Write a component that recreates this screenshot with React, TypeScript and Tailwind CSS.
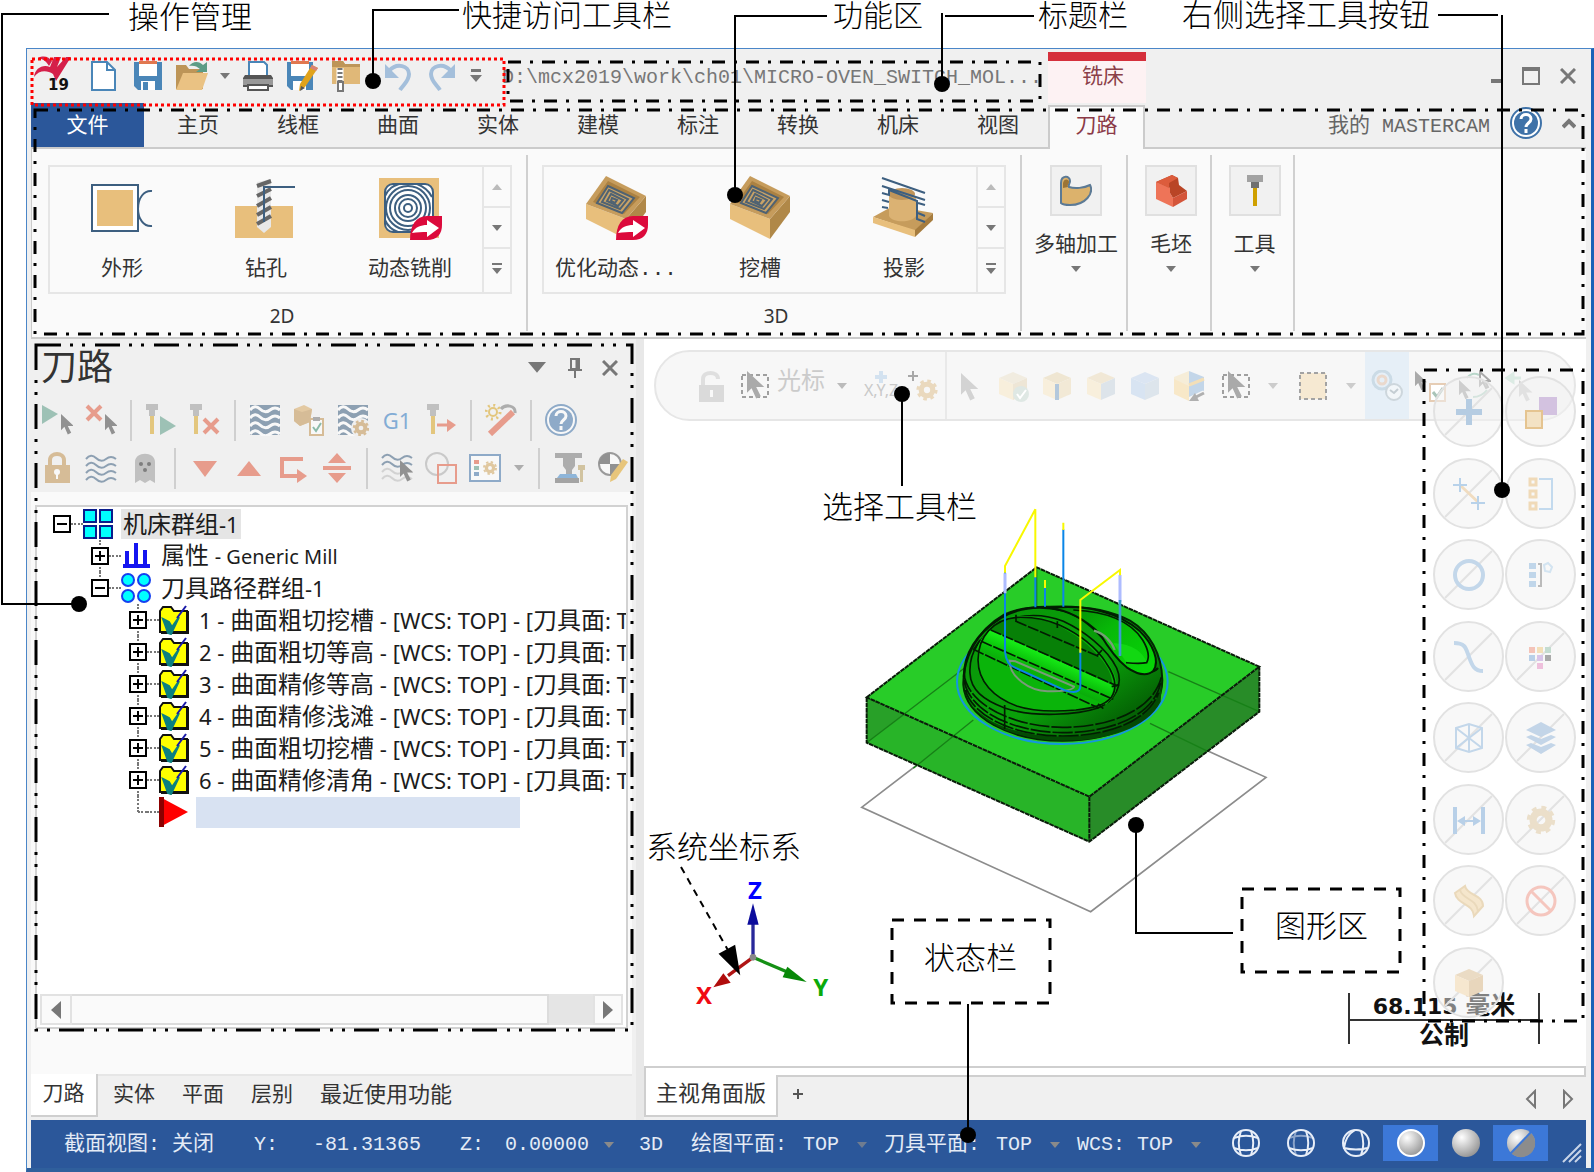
import React from "react";
import clsx from "clsx";

// ============================================================
// Mastercam 2019 workspace — annotated overview
// ============================================================

const SANS = "font-['Noto_Sans_CJK_SC','Noto_Sans',sans-serif]";
const MONO = "font-['Liberation_Mono','Noto_Sans_CJK_SC',monospace]";
const NOTE = "font-['Liberation_Serif','Noto_Sans_CJK_SC',serif]";

// ---------- drawing helpers ----------

function Svg({ w = 32, h = 32, className, children }: { w?: number; h?: number; className?: string; children: React.ReactNode }) {
  return (
    <svg width={w} height={h} viewBox={`0 0 ${w} ${h}`} className={clsx("shrink-0", className)} fill="none" aria-hidden="true">
      {children}
    </svg>
  );
}

function Caret({ color = "#777", w = 10 }: { color?: string; w?: number }) {
  return (
    <svg width={w} height={w * 0.6} viewBox="0 0 10 6" className="shrink-0" aria-hidden="true">
      <path d="M0 0h10l-5 6z" fill={color} />
    </svg>
  );
}

function Cursor({ x = 0, y = 0, s = 1, fill = "#777" }: { x?: number; y?: number; s?: number; fill?: string }) {
  return <path transform={`translate(${x} ${y}) scale(${s})`} d="M0 0v19l4-4 4 9 4-2-4-8h7z" fill={fill} />;
}

function Gear({ x, y, r = 7, color = "#d3a860" }: { x: number; y: number; r?: number; color?: string }) {
  const step = (2 * Math.PI * (r + 1)) / 16;
  return (
    <g stroke={color}>
      <circle cx={x} cy={y} r={r * 0.72} strokeWidth={r * 0.65} />
      <circle cx={x} cy={y} r={r + 1} strokeWidth={r * 0.4} strokeDasharray={`${step} ${step}`} />
    </g>
  );
}

function Cube({ top, left, right }: { top: string; left: string; right: string }) {
  return (
    <g>
      <path d="M16 2l14 6-14 6L2 8z" fill={top} />
      <path d="M2 8l14 6v16L2 24z" fill={left} />
      <path d="M30 8l-14 6v16l14-6z" fill={right} />
    </g>
  );
}

function MillTool({ x = 0 }: { x?: number }) {
  return (
    <g transform={`translate(${x} 0)`}>
      <path d="M0 0h12v6H9v6H3V6H0z" fill="#9a9a9a" />
      <path d="M4 12h4v18H4z" fill="#d9a520" />
    </g>
  );
}

function Waves({ color, rows, w = 2 }: { color: string; rows: number[]; w?: number }) {
  return (
    <g stroke={color} strokeWidth={w}>
      {rows.map((y) => (
        <path key={y} d={`M1 ${y}q5-6 10-1t10 1 10 0`} />
      ))}
    </g>
  );
}

function ArrowBadge() {
  return (
    <g>
      <path d="M33 64c0-15 6-24 17-24h15v9c0 9-5 15-15 15z" fill="#dc0a3c" />
      <path d="M35 57c3-6 9-8 15-8v-5l12 8-12 9v-5c-5 0-10 0-15 1z" fill="#fff" />
    </g>
  );
}

// ---------- quick access toolbar ----------

const quickIcons: { name: string; width: string; icon: React.ReactNode }[] = [
  {
    name: "新建",
    width: "w-[44px]",
    icon: (
      <Svg>
        <path d="M4 2h15l8 8v20H4z" fill="#fff" stroke="#4a86b8" strokeWidth={2} />
        <path d="M19 2v8h8" stroke="#4a86b8" strokeWidth={2} />
      </Svg>
    ),
  },
  {
    name: "保存",
    width: "w-[44px]",
    icon: (
      <Svg>
        <path d="M2 2h28v28H6l-4-4z" fill="#4a86b8" />
        <path d="M7 2h18v14H7z" fill="#fff" />
        <path d="M7 1h18v3H7z" fill="#e07850" />
        <path d="M9 21h14v9H9z" fill="#fff" />
        <path d="M11 22h5v8h-5z" fill="#4a86b8" />
      </Svg>
    ),
  },
  {
    name: "打开",
    width: "w-[44px]",
    icon: (
      <Svg>
        <path d="M0 5h10l3 4h14v20H0z" fill="#bd9558" />
        <path d="M7 13h25l-6 17H0z" fill="#eac283" />
        <path d="M13 6c4-5 10-5 14-1l4-3v10H20l4-3c-3-3-7-4-11-3z" fill="#5b9c86" />
      </Svg>
    ),
  },
  { name: "最近文件", width: "w-[22px]", icon: <Caret /> },
  {
    name: "打印",
    width: "w-[44px]",
    icon: (
      <Svg>
        <path d="M7 2h15l3 3v12H7z" fill="#fff" stroke="#4a86b8" strokeWidth={2} />
        <path d="M3 15h26l2 3v9H1v-9z" fill="#555" />
        <path d="M1 19h30v6H1z" fill="#999" />
        <path d="M6 25h20v5H6z" fill="#fff" stroke="#555" strokeWidth={2} />
      </Svg>
    ),
  },
  {
    name: "另存为",
    width: "w-[44px]",
    icon: (
      <Svg>
        <path d="M1 2h26v28H5l-4-4z" fill="#4a86b8" />
        <path d="M5 2h18v14H5z" fill="#fff" />
        <path d="M5 1h18v3H5z" fill="#e07850" />
        <path d="M7 21h13v9H7z" fill="#fff" />
        <path d="M26 5l6 3-13 19-6 4 1-7z" fill="#e0a31c" />
        <path d="M26 5l6 3-2 3-6-3z" fill="#d98275" />
        <path d="M15 26l4 2-5 3z" fill="#555" />
      </Svg>
    ),
  },
  {
    name: "压缩",
    width: "w-[44px]",
    icon: (
      <Svg>
        <path d="M2 1h11l2 3h15v20H2z" fill="#e0b878" />
        <path d="M2 1h11l2 3h15v3H2z" fill="#bd9558" />
        <path d="M10 8v16" stroke="#fff" strokeWidth={7} />
        <path d="M10 8v16" stroke="#777" strokeWidth={5} strokeDasharray="2 2" />
        <path d="M8 22h5v9H8z" fill="#fff" stroke="#777" strokeWidth={2} />
      </Svg>
    ),
  },
  {
    name: "撤销",
    width: "w-[52px] pl-2",
    icon: (
      <Svg>
        <path d="M7 11c8-9 20-5 20 3 0 7-5 10-9 16" stroke="#a4bfdb" strokeWidth={4} />
        <path d="M3 4v14h14z" fill="#a4bfdb" />
      </Svg>
    ),
  },
  {
    name: "重做",
    width: "w-[44px]",
    icon: (
      <Svg>
        <path d="M25 11C17 2 5 6 5 14c0 7 5 10 9 16" stroke="#a4bfdb" strokeWidth={4} />
        <path d="M29 4v14H15z" fill="#a4bfdb" />
      </Svg>
    ),
  },
  {
    name: "自定义",
    width: "w-[24px]",
    icon: (
      <Svg w={12} h={14}>
        <path d="M1 0h10v3H1zM0 6h12l-6 7z" fill="#777" />
      </Svg>
    ),
  },
];

function TitleBar() {
  return (
    <header className="flex h-[54px] items-center">
      <div className="flex w-[51px] justify-center pr-2">
        <svg width="40" height="42" viewBox="0 0 40 42" aria-label="Mastercam 19">
          <path d="M1 22c1-9 9-13 16-10l4-10h7l-4 10 9-10h5L23 26l-3-7c-6-4-14-4-19 3z" fill="#d5204a" />
          <path d="M5 3c6-3 11-1 14 3l-3 5c-3-5-6-7-11-8z" fill="#d5204a" />
          <text x="15" y="35" fontFamily="DejaVu Sans" fontSize="15" fontWeight="700" fill="#111">19</text>
        </svg>
      </div>
      {quickIcons.map((q) => (
        <button key={q.name} aria-label={q.name} className={clsx("flex h-full shrink-0 items-center justify-center", q.width)}>
          {q.icon}
        </button>
      ))}
      <h1 className={clsx("mt-[3px] ml-[14px] w-[546px] text-[20px] leading-7 whitespace-nowrap text-[#777]", MONO)}>
        {"D:\\mcx2019\\work\\ch01\\MICRO-OVEN_SWITCH_MOL..."}
      </h1>
      <div className={clsx("mt-[3px] h-[51px] w-[98px] shrink-0 border-t-[9px] border-[#d5303c] bg-[#fdf2f3] pl-[12px] text-center text-[21px] leading-[26px] text-[#8b4048]", SANS)}>
        铣床
      </div>
      <div className="ml-auto flex items-center gap-[20px] pr-[10px]">
        <button aria-label="最小化"><Svg w={12} h={18}><path d="M1 14h11" stroke="#777" strokeWidth={4} /></Svg></button>
        <button aria-label="最大化"><Svg w={18} h={18}><path d="M1 1h16v16H1z" stroke="#777" strokeWidth={2} /><path d="M0 2h18" stroke="#777" strokeWidth={4} /></Svg></button>
        <button aria-label="关闭"><Svg w={16} h={16}><path d="M1 1l14 14M15 1L1 15" stroke="#777" strokeWidth={3} /></Svg></button>
      </div>
    </header>
  );
}

// ---------- ribbon ----------

const ribbonTabs = ["主页", "线框", "曲面", "实体", "建模", "标注", "转换", "机床", "视图"];

function HelpIcon({ className }: { className?: string }) {
  return (
    <Svg className={className}>
      <circle cx={16} cy={16} r={15} fill="#fff" stroke="#3f72a8" strokeWidth={2} />
      <circle cx={16} cy={16} r={12} fill="#3f72a8" />
      <path d="M11 12c0-6 10-6 10 0 0 4-5 4-5 8M16 22v4" stroke="#fff" strokeWidth={3} />
    </Svg>
  );
}

function RibbonTabs() {
  return (
    <nav className={clsx("flex h-[46px] items-stretch border-b-2 border-[#cbcbcb] text-[21px] leading-[38px] text-[#333]", SANS)}>
      <button className="w-[113px] bg-[#2b579a] pb-1 text-white">文件</button>
      <div className="flex pl-1">
        {ribbonTabs.map((tab) => (
          <button key={tab} className="w-[100px] pb-1">{tab}</button>
        ))}
        <button className="-mb-[2px] mt-[2px] w-[97px] border-2 border-b-0 border-[#cbcbcb] bg-[#fafafa] pb-[11px] leading-[30px] text-[#8b3a48]">刀路</button>
      </div>
      <a href="#account" className={clsx("ml-auto text-[20px] leading-[48px] text-[#666]", MONO)}>
        <span className="text-[21px]">我的</span> MASTERCAM
      </a>
      <button aria-label="帮助" className="ml-[20px] pb-1"><HelpIcon /></button>
      <button aria-label="折叠功能区" className="mr-[10px] ml-[20px] pb-1">
        <Svg w={14} h={12}><path d="M1 10l6-6 6 6" stroke="#777" strokeWidth={4} /></Svg>
      </button>
    </nav>
  );
}

function PocketBlock() {
  return (
    <g>
      <path d="M3 28l40 15v20L3 43z" fill="#e8bf7c" />
      <path d="M63 20L43 43v20l20-27z" fill="#b08848" />
      <path d="M23 0l40 20-20 23L3 28z" fill="#c69c5c" />
      <path d="M25 5l32 16-16 17L10 26z" fill="#ab8142" />
      <g stroke="#4f6272" strokeWidth={2}>
        <path d="M25 10l26 12-12 15-25-10z" fill="#c9a367" />
        <path d="M26 14l19 9-8 10-18-7zM28 18l12 6-5 6-11-5z" />
        <path d="M29 22l5 2-2 3-4-2z" />
      </g>
    </g>
  );
}

const gallery2d = [
  {
    label: "外形",
    icon: (
      <g>
        <path d="M3 9h46v46H3z" fill="#fff" stroke="#3d5f80" strokeWidth={2} />
        <path d="M8 14h36v36H8z" fill="#e8bf7c" />
        <path d="M63 15c-8-1-14 7-14 18 0 10 6 18 14 17" stroke="#3d5f80" strokeWidth={2} />
      </g>
    ),
  },
  {
    label: "钻孔",
    icon: (
      <g>
        <path d="M2 30h58v32H2z" fill="#e8bf7c" />
        <path d="M24 6l14-3v48l-7 6-7-6z" fill="#e8e8e8" />
        <path d="M24 10l14-5M24 20l14-7M24 30l14-8M24 39l14-8M24 48l14-8" stroke="#666" strokeWidth={4} />
        <path d="M31 46V11h31" stroke="#3d5f80" strokeWidth={2} />
      </g>
    ),
  },
  {
    label: "动态铣削",
    icon: (
      <g>
        <path d="M2 2h60v60H2z" fill="#e8bf7c" />
        <rect x={8} y={8} width={48} height={48} rx={8} fill="#fff" stroke="#3d5f80" strokeWidth={2} />
        <g stroke="#3d5f80" strokeWidth={2}>
          <circle cx={31} cy={32} r={22} />
          <circle cx={31} cy={32} r={18} />
          <circle cx={31} cy={32} r={13} />
          <circle cx={31} cy={32} r={9} />
          <circle cx={31} cy={32} r={4} />
          <path d="M8 20C12 12 16 10 22 8M40 8c8 3 12 7 15 13M8 44c3 7 7 10 13 12" />
        </g>
        <ArrowBadge />
      </g>
    ),
  },
];

const gallery3d = [
  { label: "优化动态...", icon: <g><PocketBlock /><ArrowBadge /></g> },
  { label: "挖槽", icon: <PocketBlock /> },
  {
    label: "投影",
    icon: (
      <g>
        <path d="M2 41l20-11 40 7-18 18z" fill="#c69c5c" />
        <path d="M2 41l42 13v7L2 47z" fill="#e8bf7c" />
        <path d="M62 37v7L44 61v-7z" fill="#a67c3e" />
        <path d="M18 18v22c3 7 23 7 27 0V21z" fill="#dbb273" />
        <ellipse cx={31} cy={18} rx={13} ry={6} fill="#c0955a" />
        <g stroke="#3d5f80" strokeWidth={2}>
          <path d="M11 2l43 15M11 10l43 14M11 17l7 2V14l28 11v18l8 3M11 24l7 2M47 27l7 2M11 31l6 1M47 37l7 3" />
        </g>
      </g>
    ),
  },
];

function Gallery({ items, title }: { items: { label: string; icon: React.ReactNode }[]; title: string }) {
  return (
    <section className="flex flex-col items-center border-r-2 border-[#d0d0d0] px-[14px] pt-[10px]">
      <div className="flex h-[129px] border-2 border-[#e6e6e6]">
        {items.map((item) => (
          <button key={item.label} className="flex w-[144px] flex-col items-center pt-[9px]">
            <svg width={66} height={66} viewBox="0 0 66 66" fill="none" aria-hidden="true">{item.icon}</svg>
            <span className="mt-[14px] leading-7 whitespace-nowrap">{item.label}</span>
          </button>
        ))}
        <div className="flex w-[28px] flex-col divide-y-2 divide-[#e6e6e6] border-l-2 border-[#e6e6e6]">
          <button aria-label={`${title} 上一行`} className="flex flex-1 items-center justify-center">
            <Svg w={10} h={6}><path d="M0 6h10L5 0z" fill="#bbb" /></Svg>
          </button>
          <button aria-label={`${title} 下一行`} className="flex flex-1 items-center justify-center"><Caret /></button>
          <button aria-label={`${title} 展开`} className="flex flex-1 items-center justify-center pb-1">
            <Svg w={10} h={12}><path d="M0 0h10v2H0zM0 5h10l-5 6z" fill="#777" /></Svg>
          </button>
        </div>
      </div>
      <h2 className="mt-[8px] pl-1 font-['Noto_Sans',sans-serif] text-[19px] leading-7">{title}</h2>
    </section>
  );
}

const ribbonMenus = [
  {
    label: "多轴加工",
    width: "w-[106px]",
    icon: (
      <Svg>
        <path d="M1 8c0-8 9-8 9-2 0 3-2 3-1 6 6 2 15 1 21-2 4 8-4 20-20 20-5 0-8-1-9-2z" fill="#dcb26c" stroke="#5c7a95" strokeWidth={2} />
        <path d="M3 8c1-5 6-4 6-1 0 2-2 2-1 5l-5 1z" fill="#9c7436" />
      </Svg>
    ),
  },
  {
    label: "毛坯",
    width: "w-[84px]",
    icon: (
      <Svg>
        <path d="M1 7l14 6v5l3 5v9L1 24z" fill="#ee7458" />
        <path d="M1 7L17 0l6 3 1 7 8 6-14 7-3-5v-5z" fill="#b94526" />
        <path d="M32 16v8l-14 8v-9z" fill="#d4553a" />
        <path d="M1 7L17 0l6 3-9 5v5z" fill="#dc5c3c" />
      </Svg>
    ),
  },
  {
    label: "工具",
    width: "w-[83px]",
    icon: (
      <Svg>
        <path d="M8 0h16v7H8z" fill="#a2a2a2" />
        <path d="M12 7h8v6h-8z" fill="#707070" />
        <path d="M14 13h4v18h-4z" fill="#cfa000" />
      </Svg>
    ),
  },
];

function Ribbon() {
  return (
    <div className={clsx("flex h-[190px] border-b-2 border-l border-[#cbcbcb] bg-[#fafafa] py-[6px] text-[21px] text-[#333]", MONO)}>
      <div className="flex pl-[2px]">
        <Gallery items={gallery2d} title="2D" />
        <Gallery items={gallery3d} title="3D" />
      </div>
      {ribbonMenus.map((m) => (
        <button key={m.label} className={clsx("flex flex-col items-center border-r-2 border-[#d0d0d0] pt-[10px] pl-1", m.width)}>
          <span className="flex h-[51px] w-[52px] items-center justify-center border-2 border-[#e0e0e0] bg-[#f1f1f1]">{m.icon}</span>
          <span className="mt-[16px] mb-[6px] leading-7 whitespace-nowrap">{m.label}</span>
          <Caret />
        </button>
      ))}
    </div>
  );
}

// ---------- toolpath manager ----------

function Sep() {
  return (
    <div className="flex w-[16px] shrink-0 justify-center">
      <div className="h-[41px] w-[2px] bg-[#cfcfcf]" />
    </div>
  );
}

function ToolRow({ groups }: { groups: [string, React.ReactNode][][] }) {
  return (
    <div className="flex h-[48px] items-center pl-1">
      {groups.map((group, i) => (
        <React.Fragment key={i}>
          {i > 0 && <Sep />}
          {group.map(([name, icon]) => (
            <button key={name} aria-label={name} className={clsx("flex h-full shrink-0 items-center justify-center opacity-55", name === "更多" ? "w-[24px]" : "w-[44px]")}>
              {icon}
            </button>
          ))}
        </React.Fragment>
      ))}
    </div>
  );
}

const RED = "#e0583c";

const toolRow1: [string, React.ReactNode][][] = [
  [
    ["全选", <Svg><path d="M1 1l16 9L1 20z" fill="#5b9c86" /><Cursor x={20} y={10} s={0.85} fill="#444" /></Svg>],
    ["清除选择", <Svg><path d="M2 2l14 14M16 2L2 16" stroke={RED} strokeWidth={4} /><Cursor x={20} y={10} s={0.85} fill="#444" /></Svg>],
  ],
  [
    ["重新计算", <Svg><MillTool x={1} /><path d="M15 12l16 10-16 9z" fill="#5b9c86" /></Svg>],
    ["重算失效", <Svg><MillTool x={1} /><path d="M15 15l14 14M29 15L15 29" stroke={RED} strokeWidth={4} /></Svg>],
  ],
  [
    ["模拟", <Svg><path d="M1 1h30v30H1z" fill="#3d5f80" /><Waves color="#fff" rows={[6, 14, 22, 30]} w={3} /></Svg>],
    ["验证", <Svg><path d="M1 5l10-4 8 4-2 13-10 4-6-5z" fill="#d9ab64" /><path d="M1 5l8 3 10-3-2 13-10 4-6-5z" fill="#c29350" /><path d="M17 15h13v16H17z" fill="#fff" stroke="#c29350" strokeWidth={2} /><path d="M20 13h7v4h-7z" fill="#777" /><path d="M20 23l3 4 5-8" stroke="#3a9070" strokeWidth={2} /></Svg>],
    ["模拟选项", <Svg><path d="M1 1h30v30H1z" fill="#3d5f80" /><Waves color="#fff" rows={[6, 14, 22, 30]} w={3} /><circle cx={24} cy={24} r={10} fill="#f0f0f0" /><Gear x={24} y={24} r={6} color="#c29350" /></Svg>],
    ["后处理", <span className="font-['Noto_Sans',sans-serif] text-[22px] text-[#2a76c0]">G1</span>],
    ["高速进给", <Svg><MillTool x={2} /><path d="M12 21h13" stroke={RED} strokeWidth={3} /><path d="M22 15l9 6-9 7z" fill={RED} /></Svg>],
  ],
  [["魔棒", <Svg><circle cx={8} cy={8} r={4} stroke="#d9a520" strokeWidth={2} /><circle cx={8} cy={8} r={7} stroke="#d9a520" strokeWidth={3} strokeDasharray="2 3.5" /><path d="M16 5c4-5 15-4 14 4" stroke="#777" strokeWidth={3} /><path d="M28 8L5 30" stroke={RED} strokeWidth={6} /></Svg>]],
  [["帮助", <HelpIcon />]],
];

const toolRow2: [string, React.ReactNode][][] = [
  [
    ["锁定", <Svg><path d="M9 14V8c0-8 14-8 14 0v6" stroke="#c29350" strokeWidth={4} /><path d="M4 13h25v18H4z" fill="#c29350" /><circle cx={16} cy={20} r={3} fill="#fff" /><path d="M15 20h2v7h-2z" fill="#fff" /></Svg>],
    ["显示刀路", <Svg><Waves color="#3d5f80" rows={[7, 14, 21, 28]} /></Svg>],
    ["隐藏", <Svg><path d="M6 31V10C6-1 26-1 26 10v21l-5-3-5 3-5-3z" fill="#999" /><circle cx={12} cy={12} r={2} fill="#222" /><circle cx={20} cy={12} r={2} fill="#222" /><circle cx={16} cy={18} r={2} fill="#222" /></Svg>],
  ],
  [
    ["下移", <Svg><path d="M4 9h24L16 25z" fill={RED} /></Svg>],
    ["上移", <Svg><path d="M4 24h24L16 9z" fill={RED} /></Svg>],
    ["插入位置", <Svg><path d="M26 7H5v17h18" stroke={RED} strokeWidth={4} /><path d="M20 17l10 7-10 7z" fill={RED} /></Svg>],
    ["滚动到插入", <Svg><path d="M2 14h28v4H2zM16 1l9 10H7zM16 31l9-10H7z" fill={RED} /></Svg>],
  ],
  [
    ["仅显示选中", <Svg><Waves color="#3d5f80" rows={[6, 13]} /><Waves color="#bbb" rows={[20, 27]} /><Cursor x={19} y={8} s={0.9} fill="#444" /></Svg>],
    ["仅显示关联", <Svg><circle cx={12} cy={12} r={11} stroke="#aaa" strokeWidth={2} /><path d="M13 13h18v18H13z" stroke={RED} strokeWidth={2} /></Svg>],
    ["显示选项", <Svg><path d="M1 3h30v26H1z" fill="#fff" stroke="#3f72a8" strokeWidth={2} /><path d="M5 8h5v4H5z" fill={RED} /><path d="M5 14h5v4H5z" fill="#5b9c86" /><path d="M5 20h5v4H5z" fill="#3f72a8" /><Gear x={21} y={16} r={5} /></Svg>],
    ["更多", <Caret />],
  ],
  [
    ["机床模拟", <Svg><path d="M2 1h27v5h-7v8l-3 4h-6l-3-4V6H2z" fill="#777" /><path d="M13 18h6v4h-6z" fill="#777" /><path d="M4 26l3-4h16l2 4z" fill="#3f86c8" /><path d="M2 26h24v5H2z" fill="#666" /><path d="M25 13h7v5h-2v12h-3V18h-2z" fill="#b8a060" /></Svg>],
    ["编辑", <Svg><circle cx={13} cy={12} r={11} fill="#fff" stroke="#555" strokeWidth={2} /><path d="M13 12V1A11 11 0 0 0 2 12zM13 12v11a11 11 0 0 0 11-11z" fill="#444" /><path d="M26 7l5 3-12 17-6 3 1-7z" fill="#e0a31c" /></Svg>],
  ],
];

function OperationIcon() {
  return (
    <Svg w={30} h={30}>
      <path d="M1 27V6l3-4h8l3 4h13v21z" fill="#ff0" stroke="#111" strokeWidth={2} />
      <path d="M29 6v22H2" stroke="#111" strokeWidth={2} />
      <path d="M4 14l6 3 3 5 7-10-8 17-3-1z" fill="#0b8080" stroke="#0b8080" strokeWidth={2} />
      <path d="M18 13L27 1" stroke="#1a1aa8" strokeWidth={2} />
    </Svg>
  );
}

const squaresIcon = (
  <Svg w={30} h={30}>
    {[[1, 1], [17, 1], [1, 17], [17, 17]].map(([x, y]) => (
      <rect key={`${x}-${y}`} x={x} y={y} width={12} height={12} fill="#0ff" stroke="#0a1c8c" strokeWidth={2} />
    ))}
  </Svg>
);

const propsIcon = (
  <Svg w={30} h={30}>
    <path d="M2 25h27M6 24V10M15 24V2M24 24V9" stroke="#1414f0" strokeWidth={4} />
  </Svg>
);

const circlesIcon = (
  <Svg w={30} h={30}>
    {[[7, 7], [23, 7], [7, 23], [23, 23]].map(([x, y]) => (
      <circle key={`${x}-${y}`} cx={x} cy={y} r={6} fill="#0ff" stroke="#1440f0" strokeWidth={2} />
    ))}
  </Svg>
);

const operations = ["曲面粗切挖槽", "曲面粗切等高", "曲面精修等高", "曲面精修浅滩", "曲面粗切挖槽", "曲面精修清角"];

const indent = ["pl-[16px]", "pl-[54px]", "pl-[92px]"];
const trunk = ["left-[25px]", "left-[62px]", "left-[100px]"];

interface TreeRowProps {
  level: number;
  open?: boolean;
  leaf?: boolean;
  last?: boolean;
  icon: React.ReactNode;
  children: React.ReactNode;
}

function TreeRow({ level, open, leaf, last, icon, children }: TreeRowProps) {
  return (
    <li className={clsx("relative flex h-[32px] items-center whitespace-nowrap", indent[level])}>
      {level > 0 && <span className={clsx("absolute top-0 border-l-2 border-dotted border-[#777]", trunk[level], last ? "h-1/2" : "h-full")} />}
      {leaf ? (
        <span className="ml-[9px] w-[9px] shrink-0 border-t-2 border-dotted border-[#777]" />
      ) : (
        <button aria-label={open ? "折叠" : "展开"} className="relative size-[18px] shrink-0 border-2 border-black bg-white">
          <svg viewBox="0 0 14 14" className="size-[14px]" stroke="#000" strokeWidth={2}>
            <path d={open ? "M2 7h10" : "M2 7h10M7 2v10"} />
          </svg>
        </button>
      )}
      <span className="w-[12px] shrink-0 border-t-2 border-dotted border-[#777]" />
      {icon}
      {children}
    </li>
  );
}

function Big({ children }: { children: React.ReactNode }) {
  return <span className="text-[24px]">{children}</span>;
}

function OperationTree() {
  return (
    <ul className="flex-1 overflow-hidden pt-px font-['Noto_Sans','Noto_Sans_CJK_SC',sans-serif] text-[22px] leading-[30px] text-[#1c1c1c]">
      <TreeRow level={0} open icon={squaresIcon}>
        <span className="ml-[8px] bg-[#e5e5e5] px-[2px]"><Big>机床群组</Big>-1</span>
      </TreeRow>
      <TreeRow level={1} icon={propsIcon}>
        <span className="ml-[8px] px-[2px]"><Big>属性</Big> <span className="text-[20px]">- Generic Mill</span></span>
      </TreeRow>
      <TreeRow level={1} open last icon={circlesIcon}>
        <span className="ml-[8px] px-[2px]"><Big>刀具路径群组</Big>-1</span>
      </TreeRow>
      {operations.map((name, i) => (
        <TreeRow key={i} level={2} icon={<OperationIcon />}>
          <span className="ml-[8px] px-[2px]">
            {i + 1} - <Big>{name}</Big> - [WCS: TOP] - [<Big>刀具面</Big>: T
          </span>
        </TreeRow>
      ))}
      <TreeRow level={2} leaf last icon={<Svg w={30} h={30}><path d="M1 0l28 15L1 30z" fill="#f00" /><path d="M0 0h5v30H0z" fill="#8c0000" /></Svg>}>
        <span className="ml-[7px] h-[31px] w-[324px] bg-[#d8e2f2]" />
      </TreeRow>
    </ul>
  );
}

function ScrollBar() {
  return (
    <div className="mx-[3px] mb-[2px] flex h-[31px] bg-[#e5e5e5]">
      <button aria-label="向左滚动" className="flex w-[32px] items-center justify-center border-2 border-[#e2e2e2] bg-[#fafafa]">
        <Svg w={10} h={18}><path d="M10 0v18L0 9z" fill="#777" /></Svg>
      </button>
      <div className="mr-[44px] flex-1 border-2 border-l-0 border-[#dcdcdc] bg-[#fafafa]" />
      <button aria-label="向右滚动" className="flex w-[30px] items-center justify-center border-2 border-[#e2e2e2] bg-[#fafafa]">
        <Svg w={10} h={18}><path d="M0 0v18l10-9z" fill="#777" /></Svg>
      </button>
    </div>
  );
}

function ToolpathPanel() {
  return (
    <aside className="flex w-[601px] shrink-0 flex-col">
      <div className="flex h-[57px] items-center pl-[10px]">
        <h2 className={clsx("-mt-[8px] text-[36px] leading-none text-[#333]", SANS)}>刀路</h2>
        <button aria-label="菜单" className="ml-auto"><Caret w={18} /></button>
        <button aria-label="固定" className="ml-[22px]">
          <Svg w={14} h={20}><path d="M3 1h8v10H3zM0 12h14M7 12v8" stroke="#777" strokeWidth={2} /><path d="M9 1v10" stroke="#777" strokeWidth={3} /></Svg>
        </button>
        <button aria-label="关闭面板" className="mr-[14px] ml-[20px]">
          <Svg w={16} h={16}><path d="M1 1l14 14M15 1L1 15" stroke="#777" strokeWidth={3} /></Svg>
        </button>
      </div>
      <ToolRow groups={toolRow1} />
      <ToolRow groups={toolRow2} />
      <div className="flex flex-1 flex-col bg-[#fafafa] pt-[13px] pr-[4px] pb-[45px] pl-[4px]">
        <div className="flex flex-1 flex-col border-2 border-[#d2d2d2] bg-white">
          <OperationTree />
          <ScrollBar />
        </div>
      </div>
      <nav className={clsx("flex h-[46px] text-[21px] leading-[28px] text-[#333]", SANS)}>
        <button className="mb-[3px] w-[67px] border-r-2 border-b-2 border-[#cfcfcf] bg-white pb-[8px]">刀路</button>
        <div className="flex flex-1 gap-[27px] border-t-2 border-[#e6e6e6] pb-[12px] pl-[15px]">
          <button className="whitespace-nowrap">实体</button>
          <button className="whitespace-nowrap">平面</button>
          <button className="whitespace-nowrap">层别</button>
          <button className="whitespace-nowrap text-[22px]">最近使用功能</button>
        </div>
      </nav>
    </aside>
  );
}

// ---------- graphics window ----------

function DashedCursor() {
  return (
    <Svg>
      <rect x={3} y={5} width={26} height={22} stroke="#666" strokeWidth={2} strokeDasharray="4 3" />
      <Cursor x={8} y={1} s={1.15} fill="#777" />
    </Svg>
  );
}

function SelectionBar() {
  const cell = "flex h-full w-[44px] shrink-0 items-center justify-center";
  return (
    <div className="mx-[10px] mt-[11px] flex h-[71px] items-center overflow-hidden rounded-full border-2 border-[#e6e6e6] bg-[#f7f7f7] pl-[33px]">
      <button aria-label="解锁" className={cell}>
        <Svg className="opacity-30"><path d="M8 15V9c0-8 15-8 15 0" stroke="#aaa" strokeWidth={4} /><path d="M4 15h25v17H4z" fill="#999" /><path d="M15 20h3v7h-3z" fill="#fff" /></Svg>
      </button>
      <button aria-label="光标选择" className={clsx(cell, "opacity-60")}><DashedCursor /></button>
      <span className={clsx("w-[48px] shrink-0 pb-[14px] text-[24px] text-[#cbcbcb]", SANS)}>光标</span>
      <button aria-label="光标菜单" className="flex w-[34px] shrink-0 justify-center"><Caret color="#bbb" /></button>
      <button aria-label="坐标" className={clsx(cell, "flex-col")}>
        <Svg w={12} h={12}><path d="M6 0v12M0 6h12" stroke="#d3e2f0" strokeWidth={4} /></Svg>
        <span className="-mt-[3px] font-['Noto_Sans',sans-serif] text-[16px] leading-5 text-[#c9c9c9]">X,Y,Z</span>
      </button>
      <button aria-label="捕捉设置" className={clsx(cell, "w-[42px]! opacity-70")}>
        <Svg><path d="M5 1v10M0 6h10" stroke="#888" strokeWidth={2} /><Gear x={19} y={20} r={8} color="#e5cda6" /></Svg>
      </button>
      <span className="h-full w-[2px] shrink-0 bg-[#e9e9e9]" />
      <button aria-label="选择" className={cell}><Svg><Cursor x={8} y={3} s={1.15} fill="#d3d3d3" /></Svg></button>
      <button aria-label="选择实体" className={cell}>
        <Svg><Cube top="#f1ece0" left="#f8efdc" right="#eee6d6" /><circle cx={24} cy={24} r={8} fill="#dfe8e4" /><path d="M20 24l3 4 6-8" stroke="#fff" strokeWidth={2} /></Svg>
      </button>
      <button aria-label="选择边" className={cell}><Svg><Cube top="#efe6d2" left="#f8efdc" right="#f2e9d6" /><path d="M16 14v16" stroke="#b3c8dc" strokeWidth={4} /></Svg></button>
      <button aria-label="选择面" className={cell}><Svg><Cube top="#f1e8d6" left="#f8efdc" right="#dde4ea" /></Svg></button>
      <button aria-label="选择主体" className={cell}><Svg><Cube top="#dbe5f2" left="#d8e4f2" right="#dde5ec" /></Svg></button>
      <button aria-label="背面选择" className={cell}>
        <Svg>
          <path d="M1 7l15-6v16L1 22z" fill="#f6edd8" />
          <path d="M16 1l15 6v14l-15-7z" fill="#c3d6e9" />
          <path d="M1 9l15 7v15L1 24z" fill="#f8e8c8" />
          <path d="M16 16l15-7v11l-15 7z" fill="#c3d6e9" />
          <path d="M16 15l15-6" stroke="#f3dfb8" strokeWidth={3} />
          <path d="M31 23l-10 5" stroke="#b0b0b0" strokeWidth={3} />
          <path d="M16 31l6-8 4 8z" fill="#b0b0b0" />
        </Svg>
      </button>
      <button aria-label="窗选方式" className={clsx(cell, "w-[50px]! opacity-60")}><DashedCursor /></button>
      <button aria-label="窗选菜单" className="flex w-[24px] shrink-0 justify-center"><Caret color="#ccc" /></button>
      <button aria-label="窗选" className={clsx(cell, "w-[56px]!")}><Svg><rect x={3} y={3} width={26} height={26} fill="#f6e9d2" stroke="#a3a3a3" strokeWidth={2} strokeDasharray="4 3" /></Svg></button>
      <button aria-label="区域菜单" className="flex w-[24px] shrink-0 justify-center pr-1"><Caret color="#ccc" /></button>
      <button aria-label="验证选择" className={clsx(cell, "bg-[#e6eff7]")}>
        <Svg><circle cx={11} cy={10} r={9} stroke="#cbdbe6" strokeWidth={3} /><circle cx={11} cy={10} r={4} stroke="#ead9cd" strokeWidth={3} /><circle cx={23} cy={22} r={8} fill="#f2f6f9" stroke="#cdd6dc" strokeWidth={2} /><path d="M19 20l4 3 4-4" stroke="#c4cdd3" strokeWidth={2} /></Svg>
      </button>
      <button aria-label="选择验证" className={cell}>
        <Svg><Cursor x={0} y={1} s={0.8} fill="#aaa" /><path d="M15 14h15v17H15z" fill="#fff" stroke="#e6cdb5" strokeWidth={2} /><path d="M18 22l4 5 6-9" stroke="#a9c4b8" strokeWidth={3} /></Svg>
      </button>
      <button aria-label="反选" className={cell}>
        <Svg><Cursor x={0} y={10} s={0.8} fill="#aaa" /><path d="M8 8c4-5 8-5 12-3M14 27c6 0 10-2 14-7" stroke="#b9d6ca" strokeWidth={2} /><path d="M21 2v13l3-3 3 6 2-1-3-6h5z" stroke="#aaa" strokeWidth={2} /></Svg>
      </button>
      <button aria-label="选择上次" className={cell}><Svg><path d="M4 8h14M4 8l6-4v8z" stroke="#dcebe4" strokeWidth={3} /><Cursor x={16} y={10} s={0.9} fill="#d0d0d0" /></Svg></button>
    </div>
  );
}

function MoldModel() {
  return (
    <svg className="absolute top-[151px] left-[196px]" width={450} height={440} viewBox="0 0 1350 1320" fill="none" role="img" aria-label="旋钮模具">
      <defs>
        <linearGradient id="dome" x1="0" y1="0" x2="1" y2="1">
          <stop offset="0" stopColor="#089408" />
          <stop offset="0.55" stopColor="#0aa00a" />
          <stop offset="0.8" stopColor="#056805" />
          <stop offset="1" stopColor="#034203" />
        </linearGradient>
        <linearGradient id="bar" gradientUnits="userSpaceOnUse" x1="330" y1="180" x2="285" y2="290">
          <stop offset="0" stopColor="#078a07" />
          <stop offset="0.35" stopColor="#18f018" />
          <stop offset="0.7" stopColor="#0bc40b" />
          <stop offset="1" stopColor="#0aa80a" />
        </linearGradient>
        <linearGradient id="recess" x1="0" y1="0" x2="1" y2="0.8">
          <stop offset="0" stopColor="#068006" />
          <stop offset="0.5" stopColor="#08b808" />
          <stop offset="1" stopColor="#06d406" />
        </linearGradient>
      </defs>

      {/* construction rectangle */}
      <path d="M65 952L590 550 1278 862 752 1265z" stroke="#8c8c8c" strokeWidth={5} />

      {/* stock */}
      <path d="M80 622L590 232l668 298-510 390z" fill="#28cc28" />
      <path d="M80 622l668 298v135L80 758z" fill="#28b428" />
      <path d="M1258 530v135l-510 390V920z" fill="#288c28" />
      <path d="M80 622l115 52L80 758z" fill="#28a028" />
      <path d="M220 835L400 690M930 700l175 85M80 758l320-244M985 545l273 120M590 232v120" stroke="#178017" strokeWidth={4} />
      <path d="M80 622L590 232l668 298-510 390zM80 622v136l668 297 510-390V530M748 920v135" stroke="#0a1c0a" strokeWidth={6} strokeDasharray="14 2" />

      {/* knob */}
      <g transform="translate(300 270)">
        <ellipse cx={367} cy={305} rx={316} ry={187} stroke="#1496e0" strokeWidth={6} />
        <path d="M70 315C68 240 110 150 190 105c40-20 90-26 140-25 90-4 170 4 240 42 60 36 95 100 97 178 0 120-150 182-300 182-160 0-290-70-297-167z" fill="url(#dome)" stroke="#022602" strokeWidth={6} />
        <path d="M72 320c12 90 140 150 296 150 150 0 290-60 298-165l-4 60c-40 80-160 117-294 117-140 0-280-60-296-162z" fill="#034a03" />
        <g stroke="#021c02" strokeWidth={5}>
          <path d="M72 280c8 90 140 160 296 162 140 0 270-50 296-150M72 300c14 90 140 156 296 158 150 0 275-54 294-150M76 330c24 82 150 138 292 138 140 0 258-46 288-130" strokeDasharray="60 6" />
          <path d="M72 290c0-70 40-130 110-176 60-36 130-36 190-22 60 18 100 62 160 130 46 46 96 70 122 42" strokeWidth={7} />
          <path d="M90 280c-4-60 30-120 110-160 60-20 120-16 170 4 60 28 130 80 160 140 22 50-6 100-56 120-60 20-190 30-280 0C130 360 92 330 90 280z" />
        </g>

        {/* rear recess */}
        <path d="M330 84c110-12 210 14 270 70 40 40 60 90 40 118-20 20-50 10-80-10-30-24-56-60-80-100-40-40-90-70-150-78z" fill="url(#recess)" stroke="#021c02" strokeWidth={6} />
        <path d="M520 190c30 0 80 10 100 56-20 4-44 4-60 2z" fill="#12d812" />
        <path d="M400 90c90 4 170 30 208 90 18 30 22 50 12 68-20 4-40 2-62 0" stroke="#021c02" strokeWidth={5} />
        <path d="M462 152c30 8 54 34 62 58" stroke="#76a076" strokeWidth={7} />

        {/* front cap */}
        <path d="M110 240c0-70 50-126 120-132 60-2 100 10 130 24 60 28 110 66 140 112 30 40 40 76 18 108-20 28-60 34-110 40-70 6-130 4-180-12-70-26-118-76-118-140z" fill="#0ab40a" />
        <path d="M152 150c20-26 50-38 80-38 60 0 100 12 130 28 60 32 110 74 138 120 12 22 18 40 16 54z" fill="#078007" />
        <path d="M152 150l366 166c2 20-4 44-20 58L110 208c8-24 20-44 42-58z" fill="url(#bar)" />
        <g stroke="#021c02" strokeWidth={5}>
          <path d="M152 150l380 168M124 184l396 174M100 208l376 176M228 124l250 106" strokeDasharray="34 5" />
          <path d="M114 240c0-70 46-122 116-128 60-2 100 10 130 24 60 28 108 66 138 112 28 40 36 74 16 104-20 26-58 32-106 38-70 6-130 4-178-12-70-26-116-74-116-138z" />
          <path d="M194 375v72M120 180l-20 30M228 104v22M352 124v20M470 228l16-18M515 320l22-6M474 372l16 14" />
        </g>
        <path d="M208 242c2 50 60 90 114 92 56 0 78-6 80-14L226 244z" stroke="#7a9a7a" strokeWidth={6} />
      </g>

      {/* toolpath moves */}
      <path d="M495 235v250q4 40 30 48l150 68q46 14 46-14V480M586 262v90M615 290v60M670 118v232" stroke="#0a86e8" strokeWidth={6} />
      <path d="M495 250v60M840 255v80" stroke="#aebcff" strokeWidth={9} />
      <path d="M840 330v168" stroke="#3c9ad0" strokeWidth={8} />
      <path d="M495 248V228L586 58v204M670 98v22M615 270v24M721 488V330L840 240v16" stroke="#f8f800" strokeWidth={6} />
    </svg>
  );
}

function AxisTriad() {
  return (
    <svg className="absolute top-[525px] left-[36px]" width={160} height={160} viewBox="150 130 480 480" role="img" aria-label="XYZ">
      <path d="M369 410V300" stroke="#28289a" strokeWidth={10} />
      <path d="M369 248l17 64h-34z" fill="#0c0c9c" />
      <path d="M369 410l-75 55" stroke="#b01414" strokeWidth={10} />
      <path d="M250 500l30-42 22 28z" fill="#b00c0c" />
      <path d="M369 410l105 45" stroke="#149014" strokeWidth={10} />
      <path d="M530 484l-72-14 14-32z" fill="#088808" />
      <circle cx={369} cy={410} r={10} fill="#888" />
      <g fontFamily="Noto Sans" fontWeight="700" fontSize={72}>
        <text x={354} y={235} fill="#0000ff">Z</text>
        <text x={198} y={551} fill="#f00a14">X</text>
        <text x={550} y={526} fill="#0aaa0a">Y</text>
      </g>
    </svg>
  );
}

function ScaleBar() {
  return (
    <div className="absolute right-[46px] bottom-[22px] w-[192px] border-x-2 border-[#333] text-center font-['DejaVu_Sans','Noto_Sans_CJK_SC',sans-serif] text-[22px] leading-[25px] font-bold text-[#111]">
      <div className="border-b-2 border-[#333] whitespace-nowrap">68.115 <span className="text-[25px]">毫米</span></div>
      <div className="h-[23px] pt-[2px] text-[25px]">公制</div>
    </div>
  );
}

const quickMasks: { name: string; slash: boolean; icon: React.ReactNode }[] = [
  { name: "点", slash: true, icon: <path d="M16 3v26M3 16h26" stroke="#b5cce2" strokeWidth={6} /> },
  { name: "结果", slash: false, icon: <g><path d="M14 1h18v18H14z" fill="#d3c2e0" /><path d="M1 15h16v17H1z" fill="#f3e2c4" stroke="#e5c490" strokeWidth={2} /></g> },
  { name: "线", slash: true, icon: <g strokeWidth={2}><path d="M8 8l17 16" stroke="#f0dcc0" strokeWidth={3} /><path d="M7 0v14M0 7h14M25 18v14M18 25h14" stroke="#b8d2ea" /></g> },
  { name: "群组", slash: false, icon: <g strokeWidth={2}><path d="M5 1h6v6H5zM5 13h6v6H5zM5 25h6v6H5z" stroke="#f0dab8" strokeWidth={3} /><path d="M14 1h13v30H14" stroke="#c3daee" /></g> },
  { name: "圆弧", slash: true, icon: <circle cx={16} cy={16} r={14} stroke="#c3d7ea" strokeWidth={4} /> },
  { name: "命名群组", slash: false, icon: <g><path d="M4 4h7v6H4zM4 13h7v6H4zM4 22h7v6H4z" fill="#c0d6ea" /><path d="M13 5h3v22h-3" stroke="#bbb" strokeWidth={2} /><path d="M19 6l4-2 4 4-2 5-5-1z" stroke="#d3e4f1" strokeWidth={2} /></g> },
  { name: "曲线", slash: true, icon: <path d="M1 2c12 0 12 6 15 14s5 14 14 14" stroke="#c3d7ea" strokeWidth={4} /> },
  {
    name: "颜色",
    slash: true,
    icon: (
      <g>
        <path d="M4 6h6v6H4z" fill="#f4c3b8" /><path d="M12 6h6v6h-6z" fill="#f3dfb8" /><path d="M20 6h6v6h-6z" fill="#c4dcd0" />
        <path d="M4 14h6v6H4z" fill="#b9d0e8" /><path d="M12 14h6v6h-6z" fill="#d8c4e8" /><path d="M20 14h6v6h-6z" fill="#aaa" />
        <path d="M12 22h6v6h-6z" fill="#eec0dc" />
      </g>
    ),
  },
  { name: "线框", slash: true, icon: <path d="M3 6l13-4 13 4v20l-13 4-13-4zM3 6l26 20M29 6L3 26M16 2v28" stroke="#c3d7ea" strokeWidth={2} /> },
  { name: "层别", slash: true, icon: <path d="M16 0l15 8-15 7L1 8zM1 15l5-2 10 4 10-4 5 2-15 8zM1 23l5-2 10 4 10-4 5 2-15 9z" fill="#c3d5e8" /> },
  { name: "标注", slash: true, icon: <g><path d="M2 3v27M30 3v27" stroke="#b8d0e8" strokeWidth={4} /><path d="M6 17h20" stroke="#b8d0e8" strokeWidth={2} /><path d="M4 17l8-5v10zM28 17l-8-5v10z" fill="#b8d0e8" /></g> },
  { name: "设置", slash: true, icon: <Gear x={16} y={16} r={11} color="#ebdfca" /> },
  { name: "曲面", slash: true, icon: <path d="M2 8l10-7c2 10 18 8 18 20l-9 10C20 18 4 20 2 8zM7 5c3 10 16 8 18 21" fill="#f5e6cc" stroke="#ead9bb" strokeWidth={2} /> },
  { name: "清除", slash: true, icon: <g stroke="#f5c6be" strokeWidth={3}><circle cx={16} cy={16} r={14} /><path d="M6 6l20 20" /></g> },
  { name: "实体", slash: true, icon: <Cube top="#eadbc4" left="#f6e7cf" right="#e8d6bc" /> },
];

function QuickMasks() {
  return (
    <div className="absolute top-[37px] right-[10px] grid h-[642px] grid-cols-2 content-between gap-x-px">
      {quickMasks.map((m) => (
        <button key={m.name} aria-label={m.name} className="flex size-[71px] items-center justify-center rounded-full border-2 border-[#e2e2e2] bg-[#f2f2f2]/50">
          <svg width={67} height={67} viewBox="0 0 67 67" fill="none" aria-hidden="true">
            {m.slash && <path d="M10 57L57 10" stroke="#e2e2e2" strokeWidth={2} />}
            <g transform="translate(18 18)">{m.icon}</g>
          </svg>
        </button>
      ))}
    </div>
  );
}

function GraphicsWindow() {
  return (
    <main className="flex min-w-0 flex-1 flex-col">
      <div className="relative flex-1 bg-white">
        <SelectionBar />
        <MoldModel />
        <AxisTriad />
        <ScaleBar />
        <QuickMasks />
      </div>
      <div className="h-[9px] border-2 border-b-0 border-[#cfcfcf] bg-white" />
      <div className={clsx("flex h-[45px] text-[21px] leading-[28px] text-[#333]", SANS)}>
        <button className="mb-[3px] w-[134px] border-2 border-t-0 border-[#cfcfcf] bg-white pb-[8px] text-[22px]">主视角面版</button>
        <div className="flex flex-1 items-center justify-between border-t-2 border-[#cfcfcf] pl-[14px]">
          <button aria-label="新建视图面板" className="pb-[10px]"><Svg w={12} h={12}><path d="M6 1v10M1 6h10" stroke="#555" strokeWidth={2} /></Svg></button>
          <div className="flex gap-[25px] pr-[12px]">
            <button aria-label="上一个"><Svg w={12} h={20}><path d="M10 2v16L2 10z" stroke="#777" strokeWidth={2} /></Svg></button>
            <button aria-label="下一个"><Svg w={12} h={20}><path d="M2 2v16l8-8z" stroke="#777" strokeWidth={2} /></Svg></button>
          </div>
        </div>
      </div>
    </main>
  );
}

// ---------- status bar ----------

const globe = (inner: string, faint = "") => (
  <Svg>
    <g stroke="#e8eef8" strokeWidth={2}>
      <circle cx={16} cy={16} r={13} />
      <path d={inner} />
      <path d={faint} strokeOpacity={0.5} />
    </g>
  </Svg>
);

const shadings: { name: string; on: boolean; icon: React.ReactNode }[] = [
  { name: "线框", on: false, icon: globe("M11 4c-3 8-3 16 0 24M21 4c3 8 3 16 0 24M4 11c8-3 16-3 24 0M4 21c8 3 16 3 24 0") },
  { name: "隐藏线", on: false, icon: globe("M21 4c3 8 3 16 0 24M4 21c8 3 16 3 24 0", "M11 4c-3 8-3 16 0 24M4 11c8-3 16-3 24 0") },
  { name: "无隐藏线", on: false, icon: globe("M21 4c3 9 3 17 0 24M15 3C8 7 5 13 4 21c8 2 16 2 24 0") },
  { name: "边框着色", on: true, icon: <Svg><circle cx={16} cy={16} r={13} fill="url(#ball)" stroke="#fff" strokeWidth={2} /></Svg> },
  { name: "着色", on: false, icon: <Svg><circle cx={16} cy={16} r={14} fill="url(#ball)" /></Svg> },
  { name: "半透明", on: true, icon: <Svg><circle cx={16} cy={16} r={14} fill="url(#ball)" /><path d="M26 6A14 14 0 0 1 6 26z" fill="#8c8c8c" /><path d="M27 4L5 27" stroke="#3c78d8" strokeWidth={2} /></Svg> },
];

function StatusBar() {
  return (
    <footer className={clsx("flex h-[48px] items-center bg-[#2b579a] pt-[2px] pl-[33px] text-[20px] leading-[46px] whitespace-nowrap text-[#e4ebf6]", MONO)}>
      <svg width="0" height="0" aria-hidden="true">
        <radialGradient id="ball" cx="0.35" cy="0.3" r="0.8">
          <stop offset="0" stopColor="#fff" />
          <stop offset="1" stopColor="#8c8c8c" />
        </radialGradient>
      </svg>
      <span className="w-[190px]"><span className="text-[21px]">截面视图</span>: <span className="text-[21px]">关闭</span></span>
      <span className="w-[59px]">Y:</span>
      <span className="w-[147px]">-81.31365</span>
      <span className="w-[45px]">Z:</span>
      <button className="flex w-[134px] items-center gap-[15px] text-left">0.00000 <Caret color="#8a8a8a" /></button>
      <span className="w-[52px]">3D</span>
      <button className="flex w-[193px] items-center"><span className="w-[112px] text-left"><span className="text-[21px]">绘图平面</span>:</span>TOP<span className="ml-[18px]"><Caret color="#6f7c90" /></span></button>
      <button className="flex w-[193px] items-center"><span className="w-[112px] text-left"><span className="text-[21px]">刀具平面</span>:</span>TOP<span className="ml-[18px]"><Caret color="#8a8a8a" /></span></button>
      <button className="flex items-center"><span className="w-[60px] text-left">WCS:</span>TOP<span className="ml-[18px]"><Caret color="#8a8a8a" /></span></button>
      <div className="ml-auto flex pb-[4px]">
        {shadings.map((s) => (
          <button key={s.name} aria-label={s.name} aria-pressed={s.on} className={clsx("flex h-[36px] w-[55px] items-center justify-center", s.on && "bg-[#3c78d8]")}>
            {s.icon}
          </button>
        ))}
      </div>
      <Svg w={20} h={20} className="mt-4 mr-[4px] ml-[14px]"><path d="M1 19L19 1M7 19L19 7M13 19l6-6" stroke="#c9d5e8" strokeWidth={2} /></Svg>
    </footer>
  );
}

// ---------- call-outs ----------

const notes: { text: string; place: string }[] = [
  { text: "操作管理", place: "left-[128px] top-[1px] text-[31px]" },
  { text: "快捷访问工具栏", place: "left-[462px] top-[-1px] text-[30px]" },
  { text: "功能区", place: "left-[833px] top-[-1px] text-[30px]" },
  { text: "标题栏", place: "left-[1038px] top-[-1px] text-[30px]" },
  { text: "右侧选择工具按钮", place: "left-[1182px] top-[-1px] text-[31px]" },
  { text: "选择工具栏", place: "left-[822px] top-[491px] text-[31px]" },
  { text: "系统坐标系", place: "left-[646px] top-[831px] text-[31px]" },
  { text: "状态栏", place: "left-[924px] top-[942px] text-[31px]" },
  { text: "图形区", place: "left-[1275px] top-[910px] text-[31px]" },
];

const dots = [[79, 604], [373, 81], [735, 195], [942, 84], [1502, 490], [902, 394], [1136, 825], [968, 1135]];

function CallOuts() {
  return (
    <div className="pointer-events-none absolute inset-0">
      <svg className="absolute inset-0 size-full overflow-visible" fill="none" stroke="#000" strokeWidth={3} aria-hidden="true">
        <rect x={32} y={59} width={472} height={46} stroke="#f00" strokeDasharray="3 3" />
        <rect x={508} y={62} width={532} height={39} strokeDasharray="13 9 3 9" />
        <rect x={35} y={110} width={1548} height={224} strokeDasharray="13 9 3 9" />
        <rect x={36} y={345} width={596} height={685} strokeDasharray="25 9 3 9 3 10" />
        <rect x={1424} y={370} width={159} height={651} strokeDasharray="13 9 3 9" />
        <rect x={892} y={920} width={158} height={83} strokeDasharray="12 10" />
        <rect x={1242} y={889} width={158} height={83} strokeDasharray="12 10" />
        <g strokeWidth={2}>
          <path d="M109 14H2v590h77" />
          <path d="M459 10h-86v71" />
          <path d="M827 16h-92v179" />
          <path d="M1034 16h-89M942 13v71" />
          <path d="M1438 15h60M1502 15v475" />
          <path d="M902 394v92" />
          <path d="M1136 825v108h97" />
          <path d="M968 1004v131" />
          <path d="M681 867l48 85" strokeDasharray="7 6" />
        </g>
        <path d="M738 971l-17-17 13-7z" fill="#000" />
        {dots.map(([x, y]) => (
          <circle key={x} cx={x} cy={y} r={8} fill="#000" stroke="none" />
        ))}
      </svg>
      {notes.map((n) => (
        <span key={n.text} className={clsx("absolute leading-[34px] font-light whitespace-nowrap text-black", NOTE, n.place)}>{n.text}</span>
      ))}
    </div>
  );
}

export default function App() {
  return (
    <div className="relative flex min-h-screen flex-col overflow-hidden bg-white pt-[48px] pl-[26px]">
      <div className="flex flex-1 flex-col border-t border-r-[3px] border-b-4 border-l border-t-[#4a86c8] border-r-[#1b62b8] border-b-[#2f5f9c] border-l-[#4a86c8] bg-[#f0f0f0] pr-[5px] pl-[4px]">
        <TitleBar />
        <RibbonTabs />
        <Ribbon />
        <div className="flex flex-1">
          <ToolpathPanel />
          <div className="w-[12px] shrink-0 border-r-8 border-[#e8e8e8]" />
          <GraphicsWindow />
        </div>
        <StatusBar />
      </div>
      <CallOuts />
    </div>
  );
}
